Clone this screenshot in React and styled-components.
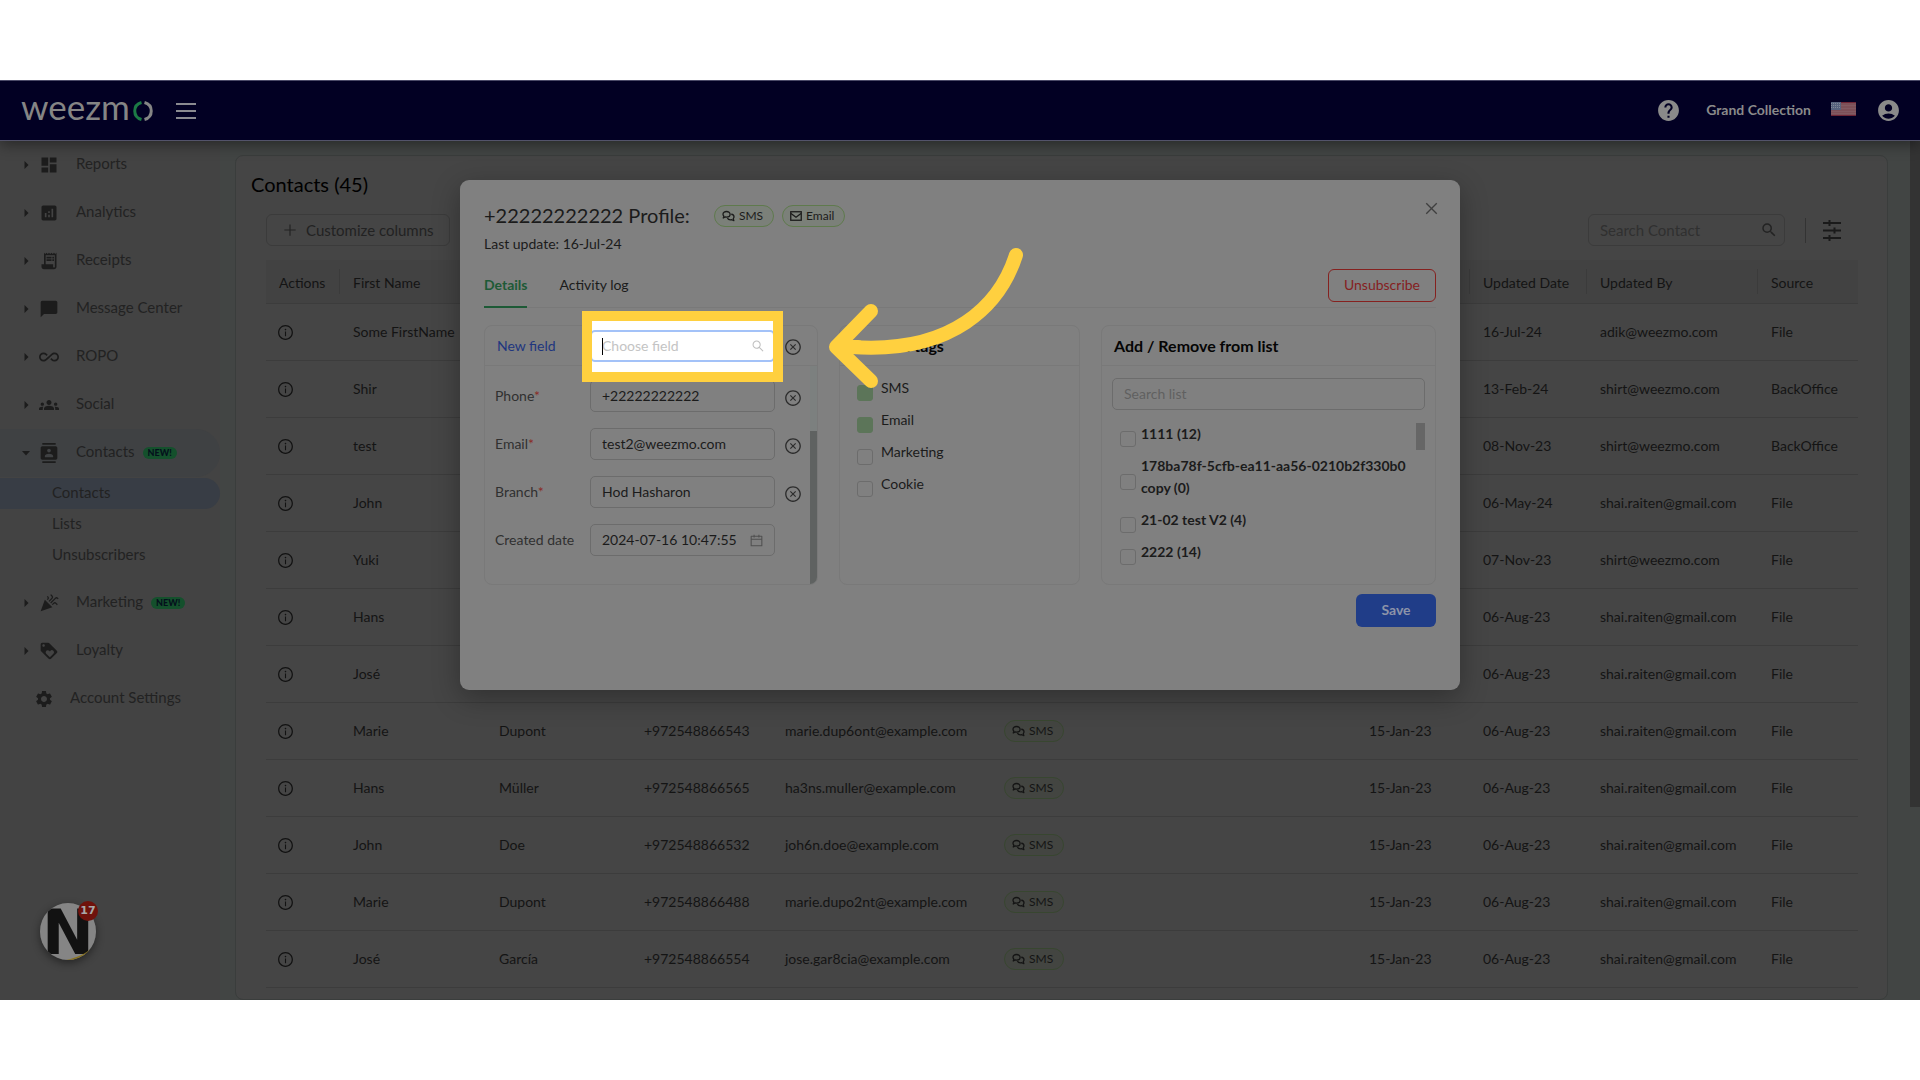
import React from "react";
import styled, { createGlobalStyle } from "styled-components";
import {
  MdDashboard,
  MdAnalytics,
  MdReceiptLong,
  MdChatBubble,
  MdAllInclusive,
  MdGroups,
  MdContacts,
  MdCelebration,
  MdLoyalty,
  MdSettings,
  MdHelp,
  MdAccountCircle,
  MdSearch,
} from "react-icons/md";
import {
  AiOutlineInfoCircle,
  AiOutlineCloseCircle,
  AiOutlinePlus,
  AiOutlineClose,
  AiOutlineSearch,
  AiOutlineCalendar,
} from "react-icons/ai";

const GlobalStyle = createGlobalStyle`
  * {
    box-sizing: border-box;
  }

  body {
    margin: 0;
    background: #ffffff;
    font-family: Lato, "Liberation Sans", sans-serif;
    font-size: 14px;
    line-height: 22px;
    color: #141414;
  }

  button,
  input {
    font: inherit;
    color: inherit;
  }
`;

const Page = styled.div`
  min-height: 100vh;
  padding: 80px 0;
`;

const Frame = styled.div`
  position: relative;
  display: flex;
  flex-direction: column;
  height: calc(100vh - 160px);
  overflow: hidden;
  background: #424544;
`;

/* ---------- top bar ---------- */

const TopBar = styled.header`
  position: relative;
  z-index: 1;
  flex: none;
  display: flex;
  align-items: center;
  height: 61px;
  padding: 0 19px 0 21px;
  background: #020023;
  border-top: 1px solid #4b4a68;
  border-bottom: 1px solid #53536a;
  box-shadow: 0 3px 14px rgba(0, 0, 0, 0.45);
`;

const Logo = styled.a`
  display: flex;
  align-items: center;
  gap: 3px;
  color: #858585;
  text-decoration: none;
`;

const LogoText = styled.span`
  font-size: 35px;
  line-height: 40px;
  padding-bottom: 10px;
`;

const MenuButton = styled.button`
  display: flex;
  flex-direction: column;
  gap: 5px;
  width: 20px;
  margin-left: 23px;
  padding: 0;
  border: none;
  background: none;
`;

const MenuLine = styled.span`
  height: 2px;
  background: #8a8a90;
`;

const TopRight = styled.div`
  display: flex;
  align-items: center;
  margin-left: auto;
  color: #8a8a8a;
`;

const IconButton = styled.button`
  display: flex;
  padding: 0;
  border: none;
  background: none;
`;

const Account = styled.span`
  margin: 0 20px 0 25px;
  padding-bottom: 2px;
  font-size: 14px;
  font-weight: bold;
`;

const Flag = styled.svg`
  margin: 0 20px 4px 0;
`;

/* ---------- side menu ---------- */

const Body = styled.div`
  flex: 1;
  display: flex;
  min-height: 0;
`;

const Sidebar = styled.nav`
  position: relative;
  flex: none;
  width: 220px;
  background: #434343;
  color: #222222;
`;

const MenuItem = styled.a`
  display: flex;
  align-items: center;
  height: 48px;
  padding-left: ${(props) => (props.$plain ? "34px" : "22px")};
  border-radius: 0 24px 24px 0;
  background: ${(props) => (props.$open ? "#3f4143" : "none")};
  color: inherit;
  font-size: 15px;
  text-decoration: none;

  svg {
    flex: none;
    color: #1c1c1c;
  }
`;

const Caret = styled.svg`
  width: 8px;
  height: 8px;
  margin-right: 9px;
`;

const MenuText = styled.span`
  margin-left: ${(props) => (props.$plain ? "16px" : "17px")};
  padding-bottom: 4px;
`;

const NewBadge = styled.span`
  margin-left: 8px;
  padding: 0 5px;
  border-radius: 6px;
  background: #14502c;
  color: #04101c;
  font-size: 9px;
  font-weight: 900;
  line-height: 12px;
`;

const SubMenu = styled.div`
  padding: 1px 0 8px;
`;

const SubItem = styled.a`
  display: block;
  height: 31px;
  padding-left: 52px;
  border-radius: 0 16px 16px 0;
  background: ${(props) => (props.$active ? "#383d45" : "none")};
  color: inherit;
  font-size: 15px;
  line-height: 28px;
  text-decoration: none;
`;

const ChatBubble = styled.button`
  position: absolute;
  left: 40px;
  bottom: 40px;
  width: 56px;
  height: 57px;
  padding: 0;
  border: none;
  background: none;
`;

const ChatLogo = styled.svg`
  display: block;
  border-radius: 50%;
  box-shadow: 0 3px 8px rgba(0, 0, 0, 0.45);
`;

const ChatCount = styled.span`
  position: absolute;
  top: -2px;
  right: -2px;
  width: 20px;
  border-radius: 50%;
  background: #6f120c;
  color: #a8a8a8;
  font-family: "DejaVu Sans", sans-serif;
  font-size: 11px;
  font-weight: bold;
  line-height: 20px;
  text-align: center;
`;

/* ---------- contacts panel ---------- */

const Main = styled.main`
  flex: 1;
  min-width: 0;
  padding: 14px 22px 0 15px;
`;

const Panel = styled.section`
  min-height: 100%;
  padding: 15px 29px 0 30px;
  border: 1px solid #3a3d3c;
  border-radius: 8px;
  background: #454545;
`;

const PanelTitle = styled.h1`
  margin: 0 0 17px -15px;
  font-size: 20px;
  font-weight: normal;
  line-height: 26px;
  color: #000000;
`;

const Toolbar = styled.div`
  display: flex;
  align-items: center;
  margin-bottom: 14px;
`;

const CustomizeButton = styled.button`
  display: flex;
  align-items: center;
  gap: 8px;
  height: 32px;
  padding: 0 15px;
  border: 1px solid #3b3b3b;
  border-radius: 6px;
  background: none;
  color: #222222;
  font-size: 15px;
`;

const SearchBox = styled.label`
  display: flex;
  align-items: center;
  width: 197px;
  height: 32px;
  margin-left: auto;
  padding: 0 6px 0 11px;
  border: 1px solid #3b3b3b;
  border-radius: 6px;
  color: #232323;

  input {
    flex: 1;
    min-width: 0;
    padding: 0;
    border: none;
    outline: none;
    background: none;
    font-size: 15px;
  }

  input::placeholder {
    color: #303030;
    opacity: 1;
  }
`;

const Separator = styled.span`
  width: 1px;
  height: 25px;
  margin: 0 17px 0 20px;
  background: #333333;
`;

const FilterButton = styled(IconButton)`
  margin-right: 17px;
`;

const Table = styled.table`
  width: 100%;
  table-layout: fixed;
  border-collapse: separate;
  border-spacing: 0;
  white-space: nowrap;
`;

const HeadCell = styled.th`
  position: relative;
  height: 44px;
  padding: 2px 12px 0 13px;
  border-bottom: 1px solid #3c3c3c;
  background: #424242;
  font-weight: normal;
  text-align: left;

  &:not(:last-child)::after {
    content: "";
    position: absolute;
    top: 9px;
    right: 0;
    width: 1px;
    height: 25px;
    background: #3b3b3b;
  }
`;

const Cell = styled.td`
  height: 57px;
  padding: 0 0 0 13px;
  border-bottom: 1px solid #3c3c3c;

  &:first-child {
    padding-left: 11px;
  }

  button {
    color: #121212;
  }
`;

const Tag = styled.span`
  display: inline-flex;
  align-items: center;
  gap: 4px;
  height: 22px;
  padding: 0 10px 0 7px;
  border: 1px solid ${(props) => (props.$dim ? "#384630" : "#5f7a4d")};
  border-radius: 11px;
  background: ${(props) => (props.$dim ? "#434541" : "#7b8079")};
  font-size: 12px;
  line-height: 20px;
`;

const PageScroll = styled.div`
  flex: none;
  width: 10px;
  height: 666px;
  background: #333333;
`;

/* ---------- profile dialog ---------- */

const Modal = styled.section`
  position: absolute;
  z-index: 2;
  top: 100px;
  left: 50%;
  width: 1000px;
  padding: 22px 24px 63px;
  transform: translateX(-50%);
  border-radius: 9px;
  background: #808080;
  box-shadow: 0 8px 28px rgba(0, 0, 0, 0.3);
  color: #1b1b1b;
`;

const CloseButton = styled(IconButton)`
  position: absolute;
  top: 20px;
  right: 20px;
  color: #3f3f3f;
`;

const ModalHead = styled.div`
  display: flex;
  align-items: center;
  gap: 8px;
  height: 28px;
`;

const ModalTitle = styled.h2`
  margin: 0 16px 0 0;
  padding-bottom: 2px;
  font-size: 20px;
  font-weight: normal;
`;

const LastUpdate = styled.p`
  margin: 3px 0 8px;
`;

const Tabs = styled.div`
  display: flex;
  align-items: center;
  gap: 32px;
  height: 45px;
  border-bottom: 1px solid #797979;
`;

const Tab = styled.button`
  height: 46px;
  padding: 1px 0 0;
  border: none;
  border-bottom: 2px solid ${(props) => (props.$active ? "#1d5a36" : "transparent")};
  background: none;
  color: ${(props) => (props.$active ? "#1d5a36" : "#1b1b1b")};
  font-weight: ${(props) => (props.$active ? "bold" : "normal")};
`;

const UnsubscribeButton = styled.button`
  height: 33px;
  margin-left: auto;
  padding: 0 15px;
  border: 1px solid #85211f;
  border-radius: 6px;
  background: none;
  color: #85211f;
`;

const Cards = styled.div`
  display: grid;
  grid-template-columns: 334px 241px 1fr;
  gap: 21px;
  margin: 17px 0 9px;
`;

const Card = styled.div`
  height: 260px;
  border: 1px solid #797979;
  border-radius: 8px;
`;

const CardHead = styled.div`
  display: flex;
  align-items: center;
  height: 40px;
  padding: 0 12px;
  border-bottom: 1px solid #797979;
  color: #050505;
  font-size: 16px;
  font-weight: bold;
`;

const FieldsArea = styled.div`
  display: flex;
  height: 218px;
`;

const Fields = styled.div`
  flex: 1;
  padding: 14px 0 0 10px;
`;

const FieldsScroll = styled.div`
  display: flex;
  align-items: flex-end;
  width: 7px;
  border-radius: 0 0 7px 0;
  background: #7c807f;
  overflow: hidden;
`;

const FieldsThumb = styled.div`
  width: 7px;
  height: 153px;
  background: #5f6261;
`;

const FieldRow = styled.div`
  display: flex;
  align-items: center;
  margin-bottom: 16px;
  color: #303030;
`;

const FieldLabel = styled.label`
  flex: none;
  width: ${(props) => (props.$head ? "93px" : "95px")};
  color: ${(props) => (props.$head ? "#20367f" : "inherit")};
  font-size: 14px;
  font-weight: normal;
`;

const Required = styled.span`
  color: #8a2b28;
`;

const TextBox = styled.span`
  display: flex;
  align-items: center;
  width: 185px;
  height: 32px;
  padding: 0 10px 0 11px;
  border: 1px solid #6c6c6c;
  border-radius: 5px;
  color: #4f4f4f;

  input {
    flex: 1;
    min-width: 0;
    padding: 0;
    border: none;
    outline: none;
    background: none;
    color: #1b1b1b;
  }

  input::placeholder {
    color: #606060;
    opacity: 1;
  }
`;

const WideBox = styled(TextBox)`
  width: auto;
`;

const ClearButton = styled(IconButton)`
  margin: 3px 0 0 9px;
  color: #2c2c2c;
`;

const ChooseSlot = styled.div`
  position: relative;
  width: 185px;
  height: 32px;
`;

const Spotlight = styled.div`
  position: absolute;
  z-index: 3;
  top: -19px;
  left: -8px;
  right: -8px;
  display: flex;
  align-items: center;
  justify-content: center;
  height: 71px;
  border: 10px solid #ffd03f;
  background: #ffffff;
  overflow: hidden;
`;

const ChooseBox = styled(TextBox)`
  position: relative;
  flex: none;
  border: 2px solid #a3c2f8;
  padding: 0 8px 0 10px;
  color: #bfbfbf;
  font-size: 14px;
  font-weight: normal;

  &::before {
    content: "";
    position: absolute;
    left: 10px;
    width: 1px;
    height: 17px;
    background: #000000;
  }

  input::placeholder {
    color: #c4c4c4;
  }
`;

const CheckList = styled.div`
  display: flex;
  flex-direction: column;
  gap: 10px;
  padding: 11px 17px;
`;

const ListChecks = styled(CheckList)`
  flex: 1;
  padding: 0 8px;
`;

const CheckLabel = styled.label`
  display: flex;
  align-items: center;
  gap: ${(props) => (props.$bold ? "5px" : "8px")};
  font-weight: ${(props) => (props.$bold ? "bold" : "normal")};
`;

const Check = styled.input.attrs({ type: "checkbox" })`
  flex: none;
  appearance: none;
  width: 16px;
  height: 16px;
  margin: 8px 0 -2px;
  border: 1px solid #6c6c6c;
  border-radius: 3px;

  &:checked {
    border-color: #5c7559;
    background: #5c7559;
  }
`;

const ListBody = styled.div`
  padding: 12px 10px 0;
`;

const ListScroll = styled.div`
  display: flex;
  align-items: flex-start;
  margin-top: 13px;
`;

const ListThumb = styled.div`
  width: 9px;
  height: 27px;
  background: #666666;
`;

const SaveButton = styled.button`
  display: block;
  width: 80px;
  height: 33px;
  margin-left: auto;
  padding-bottom: 3px;
  border: none;
  border-radius: 6px;
  background: #203d88;
  color: #8d94a8;
  font-weight: bold;
`;

const Arrow = styled.svg`
  position: absolute;
  z-index: 4;
  top: 50px;
  left: 360px;
`;

const menu = [
  { text: "Reports", icon: MdDashboard },
  { text: "Analytics", icon: MdAnalytics },
  { text: "Receipts", icon: MdReceiptLong },
  { text: "Message Center", icon: MdChatBubble },
  { text: "ROPO", icon: MdAllInclusive },
  { text: "Social", icon: MdGroups },
  {
    text: "Contacts",
    icon: MdContacts,
    isNew: true,
    children: ["Contacts", "Lists", "Unsubscribers"],
  },
  { text: "Marketing", icon: MdCelebration, isNew: true },
  { text: "Loyalty", icon: MdLoyalty },
  { text: "Account Settings", icon: MdSettings, plain: true },
];

const contacts = [
  { first: "Some FirstName", updated: "16-Jul-24", by: "adik@weezmo.com", source: "File" },
  { first: "Shir", updated: "13-Feb-24", by: "shirt@weezmo.com", source: "BackOffice" },
  { first: "test", updated: "08-Nov-23", by: "shirt@weezmo.com", source: "BackOffice" },
  { first: "John", updated: "06-May-24", by: "shai.raiten@gmail.com", source: "File" },
  { first: "Yuki", updated: "07-Nov-23", by: "shirt@weezmo.com", source: "File" },
  { first: "Hans", updated: "06-Aug-23", by: "shai.raiten@gmail.com", source: "File" },
  { first: "José", updated: "06-Aug-23", by: "shai.raiten@gmail.com", source: "File" },
  { first: "Marie", last: "Dupont", phone: "+972548866543", email: "marie.dup6ont@example.com", created: "15-Jan-23", updated: "06-Aug-23", by: "shai.raiten@gmail.com", source: "File" },
  { first: "Hans", last: "Müller", phone: "+972548866565", email: "ha3ns.muller@example.com", created: "15-Jan-23", updated: "06-Aug-23", by: "shai.raiten@gmail.com", source: "File" },
  { first: "John", last: "Doe", phone: "+972548866532", email: "joh6n.doe@example.com", created: "15-Jan-23", updated: "06-Aug-23", by: "shai.raiten@gmail.com", source: "File" },
  { first: "Marie", last: "Dupont", phone: "+972548866488", email: "marie.dupo2nt@example.com", created: "15-Jan-23", updated: "06-Aug-23", by: "shai.raiten@gmail.com", source: "File" },
  { first: "José", last: "García", phone: "+972548866554", email: "jose.gar8cia@example.com", created: "15-Jan-23", updated: "06-Aug-23", by: "shai.raiten@gmail.com", source: "File" },
];

const columns = [
  { key: "actions", title: "Actions", width: 74 },
  { key: "first", title: "First Name", width: 146 },
  { key: "last", width: 145 },
  { key: "phone", width: 141 },
  { key: "email", width: 219 },
  { key: "channels" },
  { key: "created", width: 114 },
  { key: "updated", title: "Updated Date", width: 117 },
  { key: "by", title: "Updated By", width: 171 },
  { key: "source", title: "Source", width: 100 },
];

const fields = [
  { id: "phone", label: "Phone", value: "+22222222222", required: true },
  { id: "email", label: "Email", value: "test2@weezmo.com", required: true },
  { id: "branch", label: "Branch", value: "Hod Hasharon", required: true },
  { id: "created", label: "Created date", value: "2024-07-16 10:47:55" },
];

const tags = [
  { label: "SMS", checked: true },
  { label: "Email", checked: true },
  { label: "Marketing" },
  { label: "Cookie" },
];

const lists = [
  "1111 (12)",
  "178ba78f-5cfb-ea11-aa56-0210b2f330b0 copy (0)",
  "21-02 test V2 (4)",
  "2222 (14)",
];

const CommentsIcon = () => (
  <svg width="13" height="12" viewBox="0 0 26 24" fill="none" stroke="currentColor" strokeWidth="2.6" strokeLinejoin="round">
    <path d="M9 3C5 3 2 5.400 2 8.500c0 1.600.7 2.900 1.800 3.900L2.500 16l4-2c.8.200 1.600.3 2.500.3 4 0 7.200-2.500 7.200-5.700S13 3 9 3Z" />
    <path d="M18.500 8.500c3.200.3 5.500 2.400 5.500 5.200 0 1.400-.6 2.600-1.500 3.500l1.200 4-4.200-1.700c-4 .8-7.500-.6-8.700-3.300" />
  </svg>
);

const EnvelopeIcon = () => (
  <svg width="12" height="12" viewBox="0 0 24 24" fill="none" stroke="currentColor" strokeWidth="2.6">
    <rect x="1.500" y="3.500" width="21" height="17" />
    <path d="M2 7l10 7.500L22 7" />
  </svg>
);

const TuneIcon = () => (
  <svg width="18" height="21" viewBox="0 0 18 21" stroke="#1a1a1a" strokeWidth="2">
    <path d="M0 3h18M0 10.500h18M0 18h18M6.500 0v6M11.500 7.500v6M6.500 15v6" />
  </svg>
);

const SideMenu = () => (
  <Sidebar aria-label="Main menu">
    {menu.map(({ text, icon: Icon, isNew, children, plain }) => (
      <React.Fragment key={text}>
        <MenuItem href="#" $open={Boolean(children)} $plain={plain}>
          {!plain && (
            <Caret viewBox="0 0 8 8" fill="currentColor">
              <path d={children ? "M0 2h8L4 6.500z" : "M2.500 0v8L6.500 4z"} />
            </Caret>
          )}
          <Icon size={20} />
          <MenuText $plain={plain}>{text}</MenuText>
          {isNew && <NewBadge>NEW!</NewBadge>}
        </MenuItem>
        {children && (
          <SubMenu>
            {children.map((child, index) => (
              <SubItem href="#" key={child} $active={index === 0}>
                {child}
              </SubItem>
            ))}
          </SubMenu>
        )}
      </React.Fragment>
    ))}
    <ChatBubble aria-label="Open chat">
      <ChatLogo width="56" height="57" viewBox="0 0 56 57">
        <rect width="56" height="57" fill="#858585" />
        <text x="28" y="51" textAnchor="middle" fontFamily="DejaVu Sans" fontWeight="bold" fontSize="62" fill="#121212">
          N
        </text>
        <path d="M26 57c10-2 20-6 28-14v14z" fill="#8a7420" />
      </ChatLogo>
      <ChatCount>17</ChatCount>
    </ChatBubble>
  </Sidebar>
);

const ContactsTable = () => (
  <Table>
    <colgroup>
      {columns.map((column) => (
        <col key={column.key} width={column.width} />
      ))}
    </colgroup>
    <thead>
      <tr>
        {columns.map((column) => (
          <HeadCell key={column.key}>{column.title}</HeadCell>
        ))}
      </tr>
    </thead>
    <tbody>
      {contacts.map((contact, index) => (
        <tr key={index}>
          <Cell>
            <IconButton aria-label="Contact info">
              <AiOutlineInfoCircle size={17} />
            </IconButton>
          </Cell>
          <Cell>{contact.first}</Cell>
          <Cell>{contact.last}</Cell>
          <Cell>{contact.phone}</Cell>
          <Cell>{contact.email}</Cell>
          <Cell>
            {contact.phone && (
              <Tag $dim>
                <CommentsIcon />
                SMS
              </Tag>
            )}
          </Cell>
          <Cell>{contact.created}</Cell>
          <Cell>{contact.updated}</Cell>
          <Cell>{contact.by}</Cell>
          <Cell>{contact.source}</Cell>
        </tr>
      ))}
    </tbody>
  </Table>
);

const DetailsCard = () => (
  <Card>
    <CardHead>
      <FieldLabel htmlFor="new-field" $head>
        New field
      </FieldLabel>
      <ChooseSlot>
        <Spotlight>
          <ChooseBox>
            <input id="new-field" placeholder="Choose field" />
            <AiOutlineSearch size={14} />
          </ChooseBox>
        </Spotlight>
      </ChooseSlot>
      <ClearButton aria-label="Remove new field">
        <AiOutlineCloseCircle size={18} />
      </ClearButton>
    </CardHead>
    <FieldsArea>
      <Fields>
        {fields.map((field) => (
          <FieldRow key={field.id}>
            <FieldLabel htmlFor={field.id}>
              {field.label}
              {field.required && <Required>*</Required>}
            </FieldLabel>
            <TextBox>
              <input id={field.id} defaultValue={field.value} />
              {!field.required && <AiOutlineCalendar size={15} />}
            </TextBox>
            {field.required && (
              <ClearButton aria-label={`Clear ${field.label}`}>
                <AiOutlineCloseCircle size={18} />
              </ClearButton>
            )}
          </FieldRow>
        ))}
      </Fields>
      <FieldsScroll>
        <FieldsThumb />
      </FieldsScroll>
    </FieldsArea>
  </Card>
);

const ProfileModal = () => (
  <Modal role="dialog" aria-label="Profile">
    <CloseButton aria-label="Close">
      <AiOutlineClose size={17} />
    </CloseButton>
    <ModalHead>
      <ModalTitle>+22222222222 Profile:</ModalTitle>
      <Tag>
        <CommentsIcon />
        SMS
      </Tag>
      <Tag>
        <EnvelopeIcon />
        Email
      </Tag>
    </ModalHead>
    <LastUpdate>Last update: 16-Jul-24</LastUpdate>
    <Tabs>
      <Tab $active>Details</Tab>
      <Tab>Activity log</Tab>
      <UnsubscribeButton>Unsubscribe</UnsubscribeButton>
    </Tabs>
    <Cards>
      <DetailsCard />
      <Card>
        <CardHead>Allowed tags</CardHead>
        <CheckList>
          {tags.map((tag) => (
            <CheckLabel key={tag.label}>
              <Check defaultChecked={tag.checked} />
              {tag.label}
            </CheckLabel>
          ))}
        </CheckList>
      </Card>
      <Card>
        <CardHead>Add / Remove from list</CardHead>
        <ListBody>
          <WideBox>
            <input aria-label="Search list" placeholder="Search list" />
          </WideBox>
          <ListScroll>
            <ListChecks>
              {lists.map((list) => (
                <CheckLabel key={list} $bold>
                  <Check />
                  {list}
                </CheckLabel>
              ))}
            </ListChecks>
            <ListThumb />
          </ListScroll>
        </ListBody>
      </Card>
    </Cards>
    <SaveButton>Save</SaveButton>
    <Arrow width="210" height="170" viewBox="0 0 210 170" fill="none" stroke="#ffd03f" strokeWidth="14" strokeLinecap="round" strokeLinejoin="round">
      <path d="M196 25C180 75 133 124 32 117" />
      <path d="M51 81L16 117l35 34" />
      <path d="M18 117h20" />
    </Arrow>
  </Modal>
);

const App = () => {
  return (
    <Page>
      <GlobalStyle />
      <Frame>
        <TopBar>
          <Logo href="#" aria-label="weezmo">
            <LogoText>weezm</LogoText>
            <svg width="20" height="20" viewBox="0 0 20 20" fill="none" strokeWidth="3">
              <path d="M8.500 1.500C-.5 4-.5 16 8.500 18.500" stroke="#1c7a45" />
              <path d="M11.500 1.500c9 2.500 9 14.500 0 17" stroke="#858585" />
            </svg>
          </Logo>
          <MenuButton aria-label="Toggle menu">
            <MenuLine />
            <MenuLine />
            <MenuLine />
          </MenuButton>
          <TopRight>
            <IconButton aria-label="Help">
              <MdHelp size={25} />
            </IconButton>
            <Account>Grand Collection</Account>
            <Flag width="25" height="14" viewBox="0 0 25 14">
              <rect width="25" height="14" fill="#7d5058" />
              <path d="M0 .5h25M0 13.500h25" stroke="#6e2536" />
              <path d="M10 3.500h15M10 6.500h15M0 9.500h25M0 11.500h25" stroke="#86626a" strokeWidth=".6" />
              <rect width="10" height="8" fill="#56627e" />
              <path d="M0 1.500h10M0 3.500h10M0 5.500h10" stroke="#7f8798" strokeDasharray="1 1" />
            </Flag>
            <IconButton aria-label="My account">
              <MdAccountCircle size={25} />
            </IconButton>
          </TopRight>
        </TopBar>
        <Body>
          <SideMenu />
          <Main>
            <Panel>
              <PanelTitle>Contacts (45)</PanelTitle>
              <Toolbar>
                <CustomizeButton>
                  <AiOutlinePlus size={16} />
                  Customize columns
                </CustomizeButton>
                <SearchBox>
                  <input aria-label="Search Contact" placeholder="Search Contact" />
                  <MdSearch size={18} />
                </SearchBox>
                <Separator />
                <FilterButton aria-label="Filters">
                  <TuneIcon />
                </FilterButton>
              </Toolbar>
              <ContactsTable />
            </Panel>
          </Main>
          <PageScroll />
        </Body>
        <ProfileModal />
      </Frame>
    </Page>
  );
};

export default App;
